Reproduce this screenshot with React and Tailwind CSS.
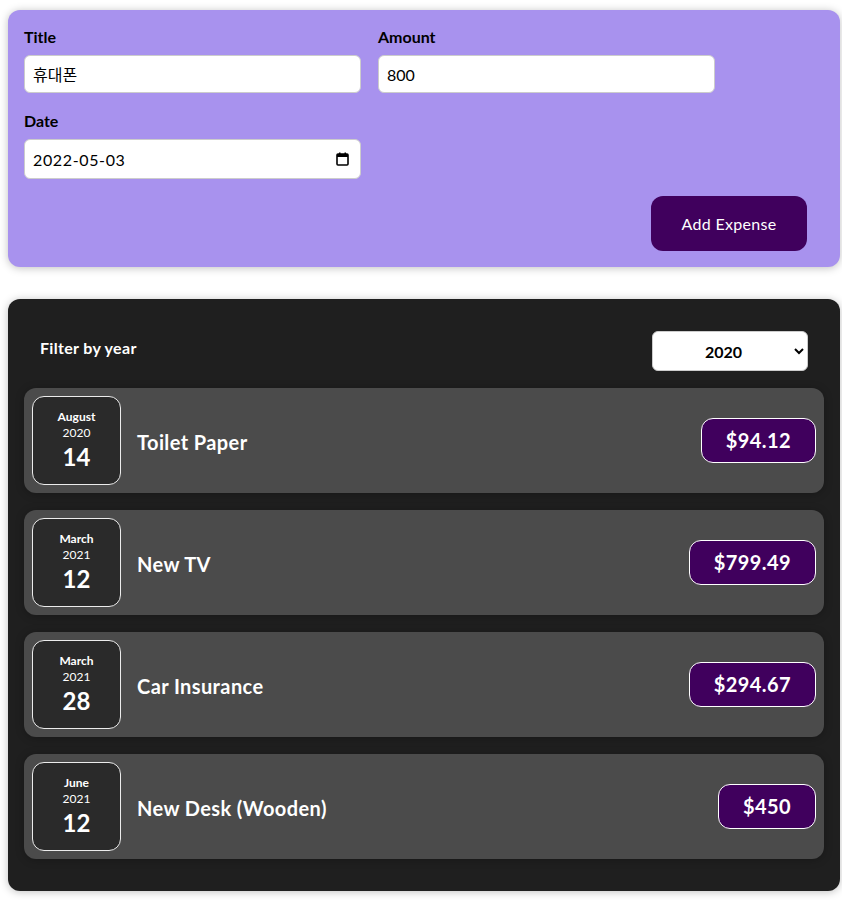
import React from 'react';

const expenses = [
    { id: 'e1', title: 'Toilet Paper', amount: 94.12, month: 'August', year: '2020', day: '14' },
    { id: 'e2', title: 'New TV', amount: 799.49, month: 'March', year: '2021', day: '12' },
    { id: 'e3', title: 'Car Insurance', amount: 294.67, month: 'March', year: '2021', day: '28' },
    { id: 'e4', title: 'New Desk (Wooden)', amount: 450, month: 'June', year: '2021', day: '12' },
];

const ExpenseDate = ({ month, year, day }) => (
    <div className="flex h-[89px] w-[89px] shrink-0 flex-col items-center justify-center rounded-xl border border-[#ececec] bg-[#2a2a2a] text-white">
        <div className="text-[12px] font-bold leading-[16px]">{month}</div>
        <div className="text-[12px] leading-[16px]">{year}</div>
        <div className="text-[24px] font-bold leading-[32px]">{day}</div>
    </div>
);

const ExpenseItem = ({ item }) => (
    <div className="flex items-center rounded-xl bg-[#4b4b4b] p-2 shadow-[0_1px_8px_rgba(0,0,0,0.25)]">
        <ExpenseDate month={item.month} year={item.year} day={item.day} />
        <div className="flex flex-1 items-center">
            <h2 className="mx-4 mt-[3px] flex-1 text-[20px] font-bold tracking-[0.02em] text-white">{item.title}</h2>
            <div className="rounded-xl border border-white bg-[#40005d] px-6 py-2 text-[20px] font-bold leading-[27px] tracking-[0.02em] text-white">
                ${item.amount}
            </div>
        </div>
    </div>
);

// calendar glyph of the native date picker
const CalendarIcon = () => (
    <svg width="13" height="14" viewBox="0 0 13 14" className="absolute right-[12px] top-[13px]">
        <rect x="1" y="2" width="11" height="11" rx="1" fill="none" stroke="#000" strokeWidth="1.6" />
        <rect x="1" y="2" width="11" height="3" fill="#000" />
        <rect x="3" y="0.5" width="1.5" height="2" fill="#000" />
        <rect x="8.5" y="0.5" width="1.5" height="2" fill="#000" />
    </svg>
);

export default function App() {
    return (
        <div className="min-h-[900px] bg-white pt-[10px] font-['Lato','Noto_Sans_CJK_KR',sans-serif]">
            {/* new expense form */}
            <div className="ml-2 w-[832px] rounded-xl bg-[#a892ee] p-4 shadow-[0_1px_8px_rgba(0,0,0,0.25)]">
                <div className="mb-[17px] flex flex-wrap gap-x-[17px] gap-y-[17px]">
                    <div>
                        <label className="mb-2 block text-[16px] font-bold leading-[21px]">Title</label>
                        <input
                            type="text"
                            defaultValue="휴대폰"
                            className="h-[38px] w-[337px] rounded-md border border-[#ccc] bg-white px-2 text-[16px]"
                        />
                    </div>
                    <div>
                        <label className="mb-2 block text-[16px] font-bold leading-[21px]">Amount</label>
                        <input
                            type="text"
                            defaultValue="800"
                            className="h-[38px] w-[337px] rounded-md border border-[#ccc] bg-white px-2 text-[16px]"
                        />
                    </div>
                    <div>
                        <label className="mb-2 block text-[16px] font-bold leading-[21px]">Date</label>
                        <div className="relative w-[337px]">
                            <input
                                type="text"
                                defaultValue="2022-05-03"
                                className="h-[40px] w-full rounded-md border border-[#ccc] bg-white px-2 text-[16px] tracking-[0.04em]"
                            />
                            <CalendarIcon />
                        </div>
                    </div>
                </div>
                <div className="flex justify-end pr-[17px]">
                    <button className="h-[55px] w-[156px] rounded-xl bg-[#40005d] text-[16px] tracking-[0.02em] text-white">
                        Add Expense
                    </button>
                </div>
            </div>

            {/* expenses list */}
            <div className="ml-2 mt-8 w-[832px] rounded-xl bg-[#1f1f1f] px-4 pb-8 pt-4 shadow-[0_1px_8px_rgba(0,0,0,0.25)]">
                <div className="px-4 text-white">
                    <div className="mb-[17px] mt-4 flex items-center justify-between">
                        <label className="mb-[6px] text-[16px] font-bold tracking-[0.02em]">Filter by year</label>
                        <select
                            defaultValue="2020"
                            className="h-[40px] w-[156px] rounded-md border border-[#ccc] bg-white pl-[48px] pr-3 text-[16px] font-bold text-black"
                        >
                            <option value="2022">2022</option>
                            <option value="2021">2021</option>
                            <option value="2020">2020</option>
                            <option value="2019">2019</option>
                        </select>
                    </div>
                </div>
                <div className="flex flex-col gap-[17px]">
                    {expenses.map((item) => (
                        <ExpenseItem key={item.id} item={item} />
                    ))}
                </div>
            </div>
        </div>
    );
}
